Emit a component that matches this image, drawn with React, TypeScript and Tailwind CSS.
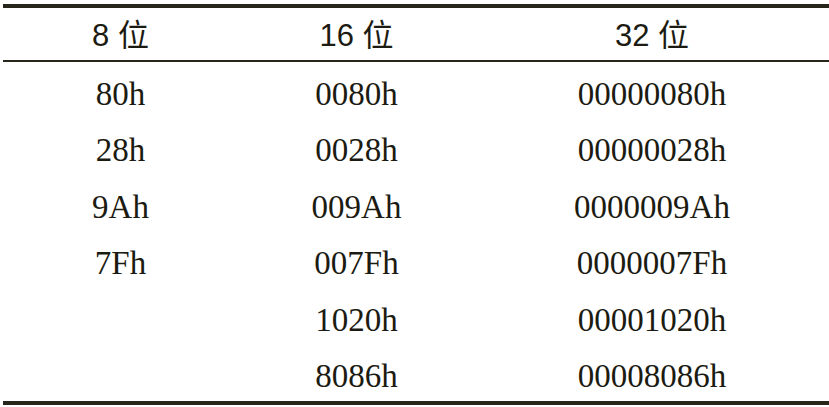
const rows: [string, string, string][] = [
  ['80h', '0080h', '00000080h'],
  ['28h', '0028h', '00000028h'],
  ['9Ah', '009Ah', '0000009Ah'],
  ['7Fh', '007Fh', '0000007Fh'],
  ['', '1020h', '00001020h'],
  ['', '8086h', '00008086h'],
];

const cols = ['w-[235px]', 'w-[237px]', 'flex-1'];

export default function App() {
  return (
    <div className="w-[829px] h-[407px] bg-white pl-[3px] pt-[4px] overflow-hidden">
      <div className="flex flex-col border-t-[4px] border-b-[4px] border-[#28261a] text-[#1c1b12]">
        {/* header */}
        <div className="flex h-[54px] items-center border-b-[2px] border-[#28261a] font-['Liberation_Sans','Noto_Sans_CJK_SC',sans-serif] text-[31px] leading-none">
          {['8', '16', '32'].map((n, i) => (
            <div key={n} className={`${cols[i]} text-center`}>
              {n} <span className="font-['Noto_Sans_CJK_SC',sans-serif] text-[31px]">位</span>
            </div>
          ))}
        </div>

        {rows.map((r) => (
          <div
            key={r[2]}
            className="flex h-[56.5px] items-center pt-[8px] font-['Liberation_Serif',serif] text-[33px] leading-none"
          >
            {r.map((c, i) => (
              <div key={i} className={`${cols[i]} text-center`}>
                {c}
              </div>
            ))}
          </div>
        ))}
      </div>
    </div>
  );
}
